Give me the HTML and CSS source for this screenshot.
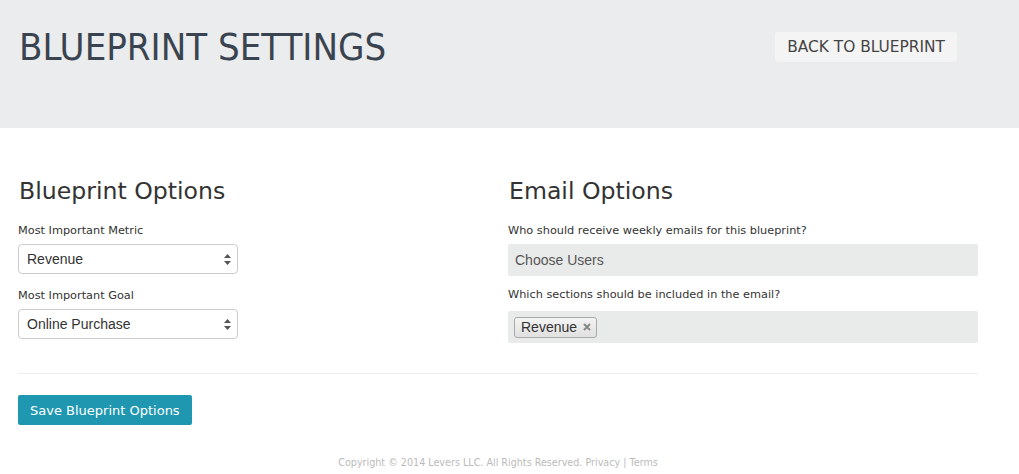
FILE: index.html
```html
<!DOCTYPE html>
<html>
<head>
<meta charset="utf-8">
<link rel="stylesheet" href="styles.css">
</head>
<body>
<header class="hero">
  <div class="hero-inner">
    <h1 class="title">BLUEPRINT SETTINGS</h1>
    <a class="back-btn" href="#">BACK TO BLUEPRINT</a>
  </div>
</header>
<main class="content">
  <div class="columns">
    <section class="col">
      <h2 class="section-title">Blueprint Options</h2>
      <label class="field-label">Most Important Metric</label>
      <div class="select"><span>Revenue</span><span class="arrows"><svg width="7" height="11" viewBox="0 0 7 11"><path d="M3.5 0L7 4H0z M3.5 11L0 7h7z" fill="#555"/></svg></span></div>
      <label class="field-label">Most Important Goal</label>
      <div class="select"><span>Online Purchase</span><span class="arrows"><svg width="7" height="11" viewBox="0 0 7 11"><path d="M3.5 0L7 4H0z M3.5 11L0 7h7z" fill="#555"/></svg></span></div>
    </section>
    <section class="col">
      <h2 class="section-title">Email Options</h2>
      <label class="field-label">Who should receive weekly emails for this blueprint?</label>
      <div class="chooser"><span class="placeholder">Choose Users</span></div>
      <label class="field-label second">Which sections should be included in the email?</label>
      <div class="chooser tags"><span class="tag">Revenue <svg class="tag-x" width="8" height="8" viewBox="0 0 8 8"><path d="M1 1L7 7M7 1L1 7" stroke="#888" stroke-width="2"/></svg></span></div>
    </section>
  </div>
  <hr class="divider">
  <button class="save-btn">Save Blueprint Options</button>
  <footer class="footer">Copyright © 2014 Levers LLC. All Rights Reserved. Privacy | Terms</footer>
</main>
</body>
</html>
```
FILE: styles.css
```css
* { box-sizing: border-box; }
body {
  margin: 0;
  font-family: "DejaVu Sans", sans-serif;
  color: #333;
  background: #fff;
}
.hero {
  background: #ebeced;
  height: 128px;
}
.hero-inner {
  width: 960px;
  margin-left: 18px;
  padding-top: 24px;
  display: flex;
  justify-content: space-between;
  align-items: flex-start;
}
.title {
  margin: 0 0 0 1px;
  font-family: "DejaVu Sans Condensed", "DejaVu Sans", sans-serif;
  font-stretch: condensed;
  font-weight: normal;
  font-size: 38px;
  color: #3a4450;
  line-height: 46px;
}
.back-btn {
  margin-top: 8px;
  margin-right: 21px;
  background: #f4f4f4;
  color: #444;
  text-decoration: none;
  font-size: 15.4px;
  height: 30px;
  line-height: 30px;
  padding: 0 12px;
  border-radius: 3px;
}
.content {
  width: 960px;
  margin-left: 18px;
  padding-top: 45px;
}
.columns {
  display: grid;
  grid-template-columns: 470px 470px;
  column-gap: 20px;
}
.col { display: flex; flex-direction: column; align-items: flex-start; }
.section-title {
  margin: 0 0 0 1px;
  font-weight: normal;
  font-size: 23.6px;
  line-height: 36px;
  color: #333;
}
.field-label {
  font-size: 11.3px;
  margin-top: 14px;
  margin-bottom: 6px;
  line-height: 15px;
  color: #333;
}
.select {
  width: 220px;
  height: 30px;
  border: 1px solid #ccc;
  border-radius: 4px;
  display: flex;
  align-items: center;
  justify-content: space-between;
  padding: 0 6px 0 8px;
  font-family: "Liberation Sans", Arial, sans-serif;
  font-size: 14px;
  color: #333;
  background: #fff;
}
.arrows { display: flex; }
.chooser {
  width: 470px;
  height: 32px;
  background: #e9ebeb;
  border-radius: 2px;
  display: flex;
  align-items: center;
  padding: 0 7px;
  font-family: "Liberation Sans", Arial, sans-serif;
  font-size: 14px;
}
.field-label.second { margin-top: 11px; margin-bottom: 9px; }
.placeholder { color: #555; }
.tags { padding: 0 6px; }
.tag {
  height: 21px;
  border: 1px solid #aaa;
  border-radius: 3px;
  background: linear-gradient(#f4f4f4, #e0e0e0);
  padding: 0 5px 0 6px;
  display: inline-flex;
  align-items: center;
  gap: 6px;
  color: #333;
}
.tag-x { display: block; }
.divider {
  border: 0;
  border-top: 1px solid #eee;
  margin: 30px 0 21px;
}
.save-btn {
  background: #2097b0;
  color: #fff;
  border: 0;
  border-radius: 2px;
  height: 30px;
  padding: 0 12px;
  font-family: "DejaVu Sans", sans-serif;
  font-size: 13px;
}
.footer {
  text-align: center;
  color: #bbb;
  font-size: 9.6px;
  margin-top: 32px;
}
```
